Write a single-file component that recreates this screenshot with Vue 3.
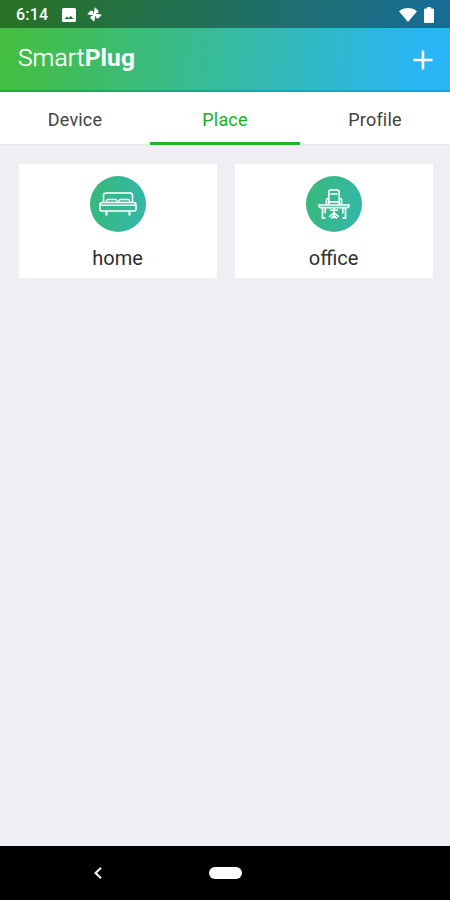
<script setup>
import { ref } from 'vue'

const tabs = ['Device', 'Place', 'Profile']
const active = ref('Place')
const places = [
  { name: 'home', icon: 'bed' },
  { name: 'office', icon: 'desk' },
]
</script>

<template>
  <div class="screen">
    <div class="top">
      <div class="status-bar">
        <span class="clock">6:14</span>
        <svg class="photo" width="14" height="14" viewBox="0 0 14 14">
          <rect width="14" height="14" rx="1.5" fill="#fff" />
          <path d="M2.500 11 4.800 8.400l1.700 1.500L9 7.900l2.600 3.100z" fill="#27702f" />
        </svg>
        <svg class="pinwheel" width="15" height="15" viewBox="-7.5 -7.5 15 15" fill="#fff">
          <g transform="rotate(12)">
            <path
              v-for="n in 4"
              :key="n"
              d="M-1.200 1.200V-7.200L3.200-4.600V-2.200L1.200-1.800V1.200z"
              :transform="`rotate(${n * 90})`"
            />
          </g>
        </svg>
        <span class="spacer"></span>
        <svg class="wifi" width="18" height="14" viewBox="0 0 18 14">
          <path d="M0 3.2C5.2-1 12.8-1 18 3.2L9 14z" fill="#fff" />
        </svg>
        <svg class="battery" width="10" height="16" viewBox="0 0 10 16">
          <path d="M3 0h4v1.6h1.800q1.200 0 1.200 1.200v12q0 1.200-1.200 1.200H1.200Q0 16 0 14.800v-12q0-1.200 1.200-1.200H3z" fill="#fff" />
        </svg>
      </div>
      <header class="app-bar">
        <h1>Smart<b>Plug</b></h1>
        <button class="add" aria-label="Add">
          <svg width="20" height="20" viewBox="0 0 20 20">
            <path d="M10 .5v19M.5 10h19" stroke="#fff" stroke-width="2.6" />
          </svg>
        </button>
      </header>
    </div>

    <nav class="tabs">
      <button v-for="tab in tabs" :key="tab" :class="{ active: tab === active }" @click="active = tab">
        {{ tab }}
      </button>
    </nav>

    <main class="places">
      <div v-for="place in places" :key="place.name" class="card">
        <div class="badge">
          <svg v-if="place.icon === 'bed'" width="38" height="24" viewBox="0 0 38 24" fill="none" stroke="#fff" stroke-width="1.6">
            <path d="M4.500 11V3.500Q4.500 1 7 1H31Q33.500 1 33.500 3.500V11" />
            <path d="M7.500 10V8.800Q7.500 7.500 9 7.500H16.500Q18 7.500 18 9V10M20 10V9Q20 7.500 21.500 7.500H29Q30.500 7.500 30.500 8.800V10" stroke-width="1.3" />
            <path d="M1 13Q1 10.500 3.500 10.500H34.500Q37 10.500 37 13V17.500Q37 19 35.500 19H2.500Q1 19 1 17.500z" />
            <path d="M1.500 13.200H36.500" />
            <path d="M7.500 19v4.500M30.500 19v4.500" stroke-width="2" />
          </svg>
          <svg v-else class="desk" width="32" height="31" viewBox="0 0 32 31" fill="none" stroke="#fff" stroke-width="1.700">
            <path d="M10.800 15.500V3Q10.800 1 12.800 1H19.200Q21.200 1 21.200 3V15.500" />
            <path d="M12.500 5H19.500M10.800 12.800H21.200" />
            <path d="M10.500 9.500H9.500Q8.500 9.500 8.500 10.500V15.500M21.500 9.500H22.500Q23.500 9.500 23.500 10.500V15.500" />
            <path d="M0 16H32M2 18.700H30M.5 16 2 18.700M31.500 16 30 18.700" />
            <path d="M4.500 19V29.200H7.500M7.200 19V24.500M27.500 19V29.200H24.500M24.800 19V24.500" />
            <path d="M12 21.300H20M16 19V29.500M11 27.800 16 23.800 21 27.800M13 29.500 16 26.500 19 29.500" stroke-width="1.500" />
          </svg>
        </div>
        <span class="name">{{ place.name }}</span>
      </div>
    </main>

    <footer class="nav-bar">
      <svg class="back" width="8" height="12" viewBox="0 0 8 12">
        <path d="M7 .8 1.600 6 7 11.200" fill="none" stroke="#eee" stroke-width="2.200" />
      </svg>
      <span class="pill"></span>
    </footer>
  </div>
</template>

<style>
body { margin: 0; }
</style>

<style scoped>
.screen {
  width: 450px; height: 900px; display: flex; flex-direction: column;
  background: #eeeef3; font-family: Roboto, "Liberation Sans", sans-serif; overflow: hidden;
}
button { border: 0; padding: 0; background: none; font: inherit; }
svg { display: block; flex: none; }

.top {
  height: 92px; box-sizing: border-box; border-bottom: 2px solid transparent;
  background:
    linear-gradient(90deg, #18b02c, #12ab9a 50%, #12a5ec) bottom / 100% 2px no-repeat border-box,
    linear-gradient(97deg, #43be40 3%, #36bba0 51%, #29b5f6 94%) border-box;
}
.status-bar {
  height: 28px; display: flex; align-items: center; box-sizing: border-box;
  padding: 1px 16px 0; background: rgba(0, 0, 0, 0.4); color: #fff;
}
.clock { width: 46px; font-size: 16px; font-weight: 500; line-height: 28px; letter-spacing: 0.2px; }
.pinwheel { margin-left: 11px; }
.spacer { flex: 1; }
.battery { margin-left: 7px; }

.app-bar {
  height: 62px; display: flex; align-items: center; justify-content: space-between;
  padding: 0 17px 0 18px; color: #fff;
}
.app-bar h1 {
  margin: 0 0 2px; font-size: 24.5px; font-weight: 300; line-height: 30px;
  letter-spacing: 0.1px; -webkit-text-stroke: 0.3px #fff;
}
.app-bar h1 b { font-weight: 700; -webkit-text-stroke: 0; }
.add { margin-top: 2px; }

.tabs {
  height: 53px; flex: none; display: flex; box-sizing: border-box;
  background: #fff; border-bottom: 1px solid #e6e6ea;
}
.tabs button {
  flex: 1; height: 53px; box-sizing: border-box; padding-top: 5px; color: #424242;
  font-size: 18px; letter-spacing: 0.2px; border-bottom: 3px solid transparent;
}
.tabs .active { color: #16b21b; border-bottom-color: #22b52a; }

.places {
  flex: 1; display: grid; grid-template-columns: 1fr 1fr; align-items: start;
  gap: 18px; padding: 18.5px 17.5px 0 18.500px;
}
.card {
  height: 114.5px; display: flex; flex-direction: column; align-items: center;
  box-sizing: border-box; padding-top: 12.5px; background: #fff;
}
.badge {
  width: 56px; height: 56px; border-radius: 50%; display: flex;
  align-items: center; justify-content: center;
  background: linear-gradient(100deg, #37b978, #34b7ac);
}
.name { margin-top: 14px; font-size: 20px; line-height: 24px; color: #303030; }

.nav-bar {
  height: 54px; flex: none; display: flex; align-items: center; background: #000;
}
.back { margin-left: 94px; }
.pill { width: 33px; height: 12px; margin-left: 107px; border-radius: 6px; background: #fff; }
</style>
